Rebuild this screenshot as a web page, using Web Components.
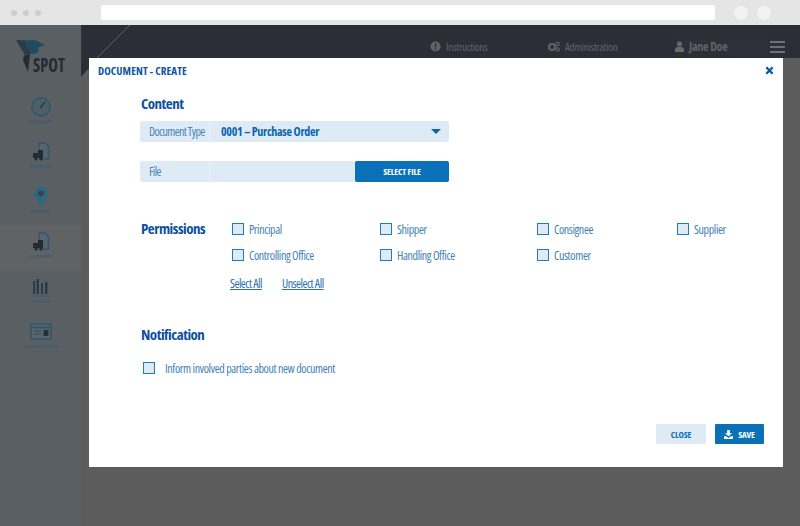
<!DOCTYPE html>
<html>
<head>
<meta charset="utf-8">
<style>
  html, body { margin: 0; height: 100%; overflow: hidden; background: #5c5c5c; }
  body { width: 800px; height: 526px; display: flex; flex-direction: column; font-family: "Open Sans", "Liberation Sans", sans-serif; }
</style>
</head>
<body>
<browser-bar></browser-bar>
<app-shell>
  <side-item slot="nav" label="DASHBOARD" icon="gauge"></side-item>
  <side-item slot="nav" label="TRANSPORT" icon="doc"></side-item>
  <side-item slot="nav" label="TRACKING" icon="pin"></side-item>
  <side-item slot="nav" label="DOCUMENTS" icon="doc" active></side-item>
  <side-item slot="nav" label="REPORTS" icon="bars"></side-item>
  <side-item slot="nav" label="ADMINISTRATION" icon="card"></side-item>
</app-shell>
<modal-dialog heading="DOCUMENT - CREATE">
  <form-section heading="Content">
    <field-row label="Document Type" value="0001 – Purchase Order"></field-row>
    <field-row label="File" button="SELECT FILE" style="margin-top:19px"></field-row>
  </form-section>
  <permission-grid></permission-grid>
  <form-section heading="Notification" class="notify">
    <check-box label="Inform involved parties about new document" style="margin:17px 0 0 3px;--gap:10px"></check-box>
  </form-section>
  <div slot="footer" style="display:flex;gap:9px">
    <action-button kind="light">CLOSE</action-button>
    <action-button kind="solid" icon>SAVE</action-button>
  </div>
</modal-dialog>

<script>
const COND = `font-family:"Open Sans","Liberation Sans",sans-serif;font-stretch:75%;`;

class BrowserBar extends HTMLElement {
  constructor() {
    super();
    this.attachShadow({ mode: 'open' });
    this.shadowRoot.innerHTML = `
    <style>
      :host { display:flex; align-items:center; height:25px; background:#e5e5e5; flex:none; }
      .dots { display:flex; gap:6px; margin-left:11px; width:90px; }
      .dots i { width:6px; height:6px; border-radius:50%; background:#cdcdcd; }
      .url { width:614px; height:15px; background:#fff; border-radius:2px; }
      .round { display:flex; gap:9px; margin-left:19px; }
      .round i { width:14px; height:14px; border-radius:50%; background:#f2f2f2; }
    </style>
    <div class="dots"><i></i><i></i><i></i></div>
    <div class="url"></div>
    <div class="round"><i></i><i></i></div>`;
  }
}

const ICONS = {
  gauge: `<circle cx="12" cy="12" r="9" fill="#4e5f68" stroke="#35566a" stroke-width="1.800"/><path d="M11 13l5-6" stroke="#2c3c48" stroke-width="1.600"/><path d="M6 12h2M12 5.500v2" stroke="#35566a"/>`,
  doc: `<path d="M10 3h6l3.500 3.500V19H10z" fill="#55646d" stroke="#35566a" stroke-width="1.500"/><path d="M4 13h5v-3h5v8H4z" fill="#232b33"/><circle cx="7" cy="19" r="1.500" fill="#232b33"/><circle cx="12" cy="19" r="1.500" fill="#232b33"/>`,
  pin: `<path d="M12 2a6.500 6.500 0 0 0-6.500 6.500C5.500 13 12 21.500 12 21.500S18.500 13 18.500 8.500A6.500 6.500 0 0 0 12 2z" fill="#2a6a80"/><circle cx="12" cy="8.500" r="2.800" fill="#3a3d4c"/>`,
  bars: `<path d="M4 6h2v13H4zM7.500 4h2.500v15H7.500zM12 8h2v11h-2zM16 7h2.500v12H16z" fill="#2b3a45"/><path d="M3 21h17" stroke="#3d5a6c" stroke-width="1.500"/>`,
  card: `<rect x="2" y="4" width="20" height="15" fill="#56666e" stroke="#35566a" stroke-width="1.500"/><path d="M2 7.500h20" stroke="#35566a" stroke-width="2"/><path d="M5 11h7M5 14h7" stroke="#33495a" stroke-width="1.200"/><rect x="14.500" y="10" width="5" height="6" fill="#2a3038"/>`
};

class SideItem extends HTMLElement {
  constructor() {
    super();
    this.attachShadow({ mode: 'open' });
  }
  connectedCallback() {
    const icon = ICONS[this.getAttribute('icon')];
    this.shadowRoot.innerHTML = `
    <style>
      :host { display:flex; flex-direction:column; align-items:center; height:45px; box-sizing:border-box; padding-top:5px; color:#3f5a6e; }
      :host([active]) { background:#5f6366; }
      svg { width:24px; height:24px; display:block; filter:blur(.4px); }
      span { font:700 4px/6px "Open Sans",sans-serif; white-space:nowrap; letter-spacing:-.05px; }
    </style>
    <svg viewBox="0 0 24 24">${icon}</svg>
    <span>${this.getAttribute('label')}</span>`;
  }
}

class AppShell extends HTMLElement {
  constructor() {
    super();
    this.attachShadow({ mode: 'open' });
    this.shadowRoot.innerHTML = `
    <style>
      :host { display:flex; flex:1; min-height:0; background:#5c5c5c; }
      aside { width:81px; flex:none; background:#5a5f63; box-sizing:border-box; padding-top:15px; }
      .logo { display:flex; height:50px; margin-left:16px; align-items:flex-end; position:relative; }
      .logo svg { position:absolute; left:0; top:0; }
      .logo b { margin:0 0 17px 17px; width:28px; font:700 20px/16px "Open Sans",sans-serif; font-stretch:75%; color:#222b33; transform:scaleX(.82); transform-origin:0 50%; display:block; }
      main { flex:1; display:flex; flex-direction:column; position:relative; }
      header { height:33px; box-sizing:border-box; padding-top:10px; flex:none; background:#2b2e36; display:flex; align-items:center; color:#626363; position:relative; font-size:11px; letter-spacing:-.25px; ${COND} }
      svg.slash { position:absolute; left:0; top:0; overflow:visible; }
      .it { display:flex; align-items:center; gap:5px; white-space:nowrap; flex:none; }
      .it svg { flex:none; }
      .burger { width:15px; display:flex; flex-direction:column; gap:3px; flex:none; }
      .burger i { height:2px; background:#6f7072; }
      .user { background:#2d3038; }
    </style>
    <aside>
      <div class="logo">
        <svg width="32" height="33" viewBox="0 0 32 33">
          <path d="M0 0l10 .5L19 13l-10 2-5-8z" fill="#2c3a45"/>
          <path d="M8 .5L19 0l4 2 6 3-6 2-1 5-3 2-5-1-3-6z" fill="#1f4a60"/>
          <path d="M14 14l-6 1.500L7 20l5 12 1-9z" fill="#222b33"/>
        </svg>
        <b>SPOT</b>
      </div>
      <slot name="nav"></slot>
    </aside>
    <main>
      <header>
        <svg class="slash" width="60" height="53"><path d="M0 33h8v10L0 52z" fill="#2b2e36"/><path d="M49 0L16 33" stroke="#5f6166" stroke-width="1"/></svg>
        <div class="it" style="margin-left:349px;width:118px"><svg width="11" height="11" viewBox="0 0 12 12"><circle cx="6" cy="6" r="5.500" fill="#626363"/><path d="M6 2.500v4.500M6 8v1.500" stroke="#2b2e36" stroke-width="1.500"/></svg><span>Instructions</span></div>
        <div class="it" style="width:127px"><svg width="12" height="11" viewBox="0 0 12 11"><circle cx="4" cy="6" r="3" fill="none" stroke="#626363" stroke-width="2"/><circle cx="9.500" cy="3" r="1.700" fill="none" stroke="#626363" stroke-width="1.200"/><circle cx="9.500" cy="8.500" r="1.700" fill="none" stroke="#626363" stroke-width="1.200"/></svg><span>Administration</span></div>
        <div class="it user" style="width:94px;font-weight:700;font-size:12px"><svg width="9" height="11" viewBox="0 0 9 11"><circle cx="4.500" cy="3" r="2.500" fill="#6a6a69"/><path d="M0 11V8l2-2h5l2 2v3z" fill="#6a6a69"/></svg><span>Jane Doe</span></div>
        <div class="burger" style="margin-left:1px"><i></i><i></i><i></i></div>
      </header>
    </main>`;
  }
}

class ModalDialog extends HTMLElement {
  constructor() {
    super();
    this.attachShadow({ mode: 'open' });
  }
  connectedCallback() {
    this.shadowRoot.innerHTML = `
    <style>
      :host { position:absolute; left:89px; top:58px; width:694px; height:409px; background:#fff; display:flex; flex-direction:column; box-sizing:border-box; }
      .title { display:flex; justify-content:space-between; align-items:center; height:26px; padding:0 9px 2px; box-sizing:border-box; color:#0b55a3; font-size:11px; font-weight:700; letter-spacing:.1px; ${COND} }
      .x { width:9px; height:9px; display:block; }
      .body { flex:1; padding:9px 51px 0; box-sizing:border-box; }
      .foot { display:flex; justify-content:flex-end; padding:0 19px 23px 0; }
    </style>
    <div class="title"><span>${this.getAttribute('heading')}</span>
      <svg class="x" viewBox="0 0 9 9"><path d="M1.300 1.300l6.400 6.400M7.700 1.300L1.300 7.700" stroke="#0b55a3" stroke-width="2.300"/></svg></div>
    <div class="body"><slot></slot></div>
    <div class="foot"><slot name="footer"></slot></div>`;
  }
}

class FormSection extends HTMLElement {
  constructor() {
    super();
    this.attachShadow({ mode: 'open' });
  }
  connectedCallback() {
    this.shadowRoot.innerHTML = `
    <style>
      :host { display:block; }
      :host(.notify) { margin-top:32px; }
      h2 { margin:0 0 0 1px; font-size:15px; line-height:20px; font-weight:700; color:#0b4f9e; letter-spacing:-.5px; ${COND} }
      .in { margin-top:8px; }
    </style>
    <h2>${this.getAttribute('heading')}</h2><div class="in"><slot></slot></div>`;
  }
}

class FieldRow extends HTMLElement {
  constructor() {
    super();
    this.attachShadow({ mode: 'open' });
  }
  connectedCallback() {
    const value = this.getAttribute('value');
    const button = this.getAttribute('button');
    this.shadowRoot.innerHTML = `
    <style>
      :host { display:flex; width:309px; height:21px; background:#deebf5; border-radius:2px; font-size:12px; ${COND} }
      .lab { width:70px; padding-left:9px; box-sizing:border-box; line-height:21px; color:#4b86b5; border-right:1px solid #e9f1f8; white-space:nowrap; letter-spacing:-.65px; }
      .val { flex:1; padding-left:11px; line-height:21px; font-weight:700; color:#0a63ad; font-size:12px; position:relative; letter-spacing:-.3px; }
      .caret { position:absolute; right:8px; top:8px; width:0; height:0; border:5px solid transparent; border-top-color:#0a63ad; border-bottom:0; }
      button { width:94px; border:0; background:#0a71b9; color:#fff; font:inherit; font-size:9px; font-weight:700; padding:0; border-radius:2px; font-stretch:75%; letter-spacing:-.1px; }
    </style>
    <div class="lab">${this.getAttribute('label')}</div>
    <div class="val">${value || ''}${value ? '<i class="caret"></i>' : ''}</div>
    ${button ? `<button>${button}</button>` : ''}`;
  }
}

class CheckBox extends HTMLElement {
  constructor() {
    super();
    this.attachShadow({ mode: 'open' });
  }
  connectedCallback() {
    this.shadowRoot.innerHTML = `
    <style>
      :host { display:flex; align-items:center; gap:var(--gap,5px); height:14px; white-space:nowrap; color:#3f82b8; font-size:12px; letter-spacing:-.38px; ${COND} }
      i { width:10px; height:10px; flex:none; background:#deebf5; border:1.500px solid #1b7cc0; }
    </style>
    <i></i><span>${this.getAttribute('label')}</span>`;
  }
}

class PermissionGrid extends HTMLElement {
  constructor() {
    super();
    this.attachShadow({ mode: 'open' });
    const rows = [['Principal', 'Shipper', 'Consignee', 'Supplier'], ['Controlling Office', 'Handling Office', 'Customer']];
    this.shadowRoot.innerHTML = `
    <style>
      :host { display:flex; margin-top:36px; color:#0b4f9e; }
      h2 { margin:0 0 0 1px; width:90px; font-size:15px; line-height:20px; font-weight:700; color:#0b4f9e; letter-spacing:-.5px; ${COND} }
      .grid { display:grid; grid-template-columns:148px 157px 140px auto; row-gap:12px; padding-top:4px; margin-left:1px; }
      .links { grid-column:1/-1; display:flex; gap:20px; margin:2px 0 0 -2px; font-size:12px; letter-spacing:-.5px; color:#2a6fad; line-height:16px; ${COND} }
      a { color:inherit; text-decoration:underline; }
    </style>
    <h2>Permissions</h2>
    <div class="grid">
      ${rows.flat().map(l => `<check-box label="${l}"></check-box>`).join('')}
      <div class="links"><a>Select All</a><a>Unselect All</a></div>
    </div>`;
  }
}

class ActionButton extends HTMLElement {
  constructor() {
    super();
    this.attachShadow({ mode: 'open' });
  }
  connectedCallback() {
    const solid = this.getAttribute('kind') === 'solid';
    this.shadowRoot.innerHTML = `
    <style>
      :host { display:flex; align-items:center; justify-content:center; gap:5px; width:${solid ? 49 : 50}px; height:20px; border-radius:1px; font-size:9px; font-weight:700; letter-spacing:-.1px; background:${solid ? '#0a71b9' : '#deebf5'}; color:${solid ? '#fff' : '#0a71b9'}; ${COND} }
      svg { width:9px; height:9px; }
    </style>
    ${this.hasAttribute('icon') ? `<svg viewBox="0 0 10 10"><path d="M3.500 0h3v3.500H9L5 7 1 3.500h2.500zM0 7h2.500L5 9l2.500-2H10v3H0z" fill="#fff"/></svg>` : ''}
    <slot></slot>`;
  }
}

customElements.define('browser-bar', BrowserBar);
customElements.define('side-item', SideItem);
customElements.define('app-shell', AppShell);
customElements.define('modal-dialog', ModalDialog);
customElements.define('form-section', FormSection);
customElements.define('field-row', FieldRow);
customElements.define('check-box', CheckBox);
customElements.define('permission-grid', PermissionGrid);
customElements.define('action-button', ActionButton);
</script>
</body>
</html>
